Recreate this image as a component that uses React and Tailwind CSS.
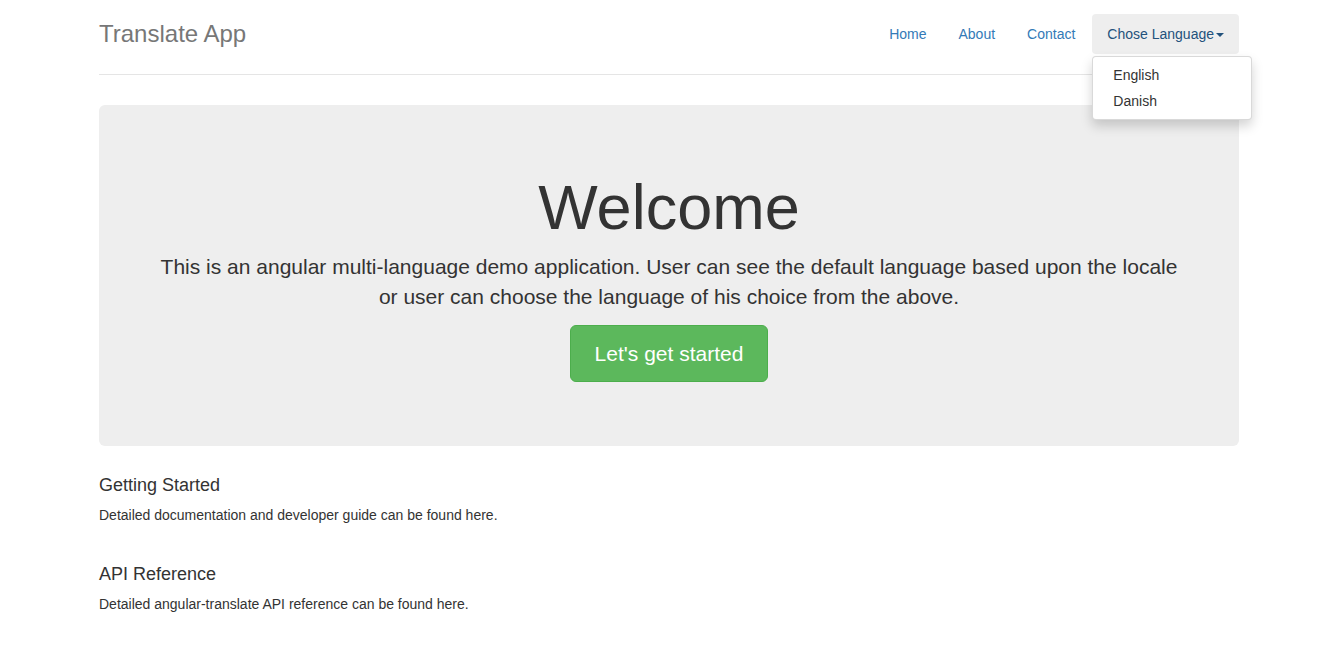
import { useState } from 'react'

const font = { fontFamily: '"Liberation Sans", Arial, Helvetica, sans-serif' }

function Caret() {
  return (
    <span className="inline-block w-0 h-0 ml-[2px] align-middle border-t-[4px] border-t-[#23527c] border-x-[4px] border-x-transparent" />
  )
}

export default function App() {
  const [open, setOpen] = useState(true)

  return (
    <div className="min-h-screen bg-white text-[#333] text-[14px]" style={font}>
      <div className="w-[1171px] mx-auto pl-[15px] pr-[16px]">

        {/* Header */}
        <div className="flex items-center justify-between pt-[14px] pb-[20px] border-b border-[#e5e5e5]">
          <h3 className="text-[24px] leading-[40px] text-[#777]">Translate App</h3>
          <ul className="flex gap-[2px]">
            {['Home', 'About', 'Contact'].map(item => (
              <li key={item}>
                <a href="#" className="block px-[15px] py-[10px] leading-[20px] text-[#337ab7] rounded-[4px] hover:bg-[#eee]">
                  {item}
                </a>
              </li>
            ))}
            <li className="relative">
              <button type="button" onClick={() => setOpen(!open)}
                className="block px-[15px] py-[10px] leading-[20px] text-[#23527c] bg-[#eee] rounded-[4px]">
                Chose Language<Caret />
              </button>
              {open && (
                <ul className="absolute left-0 top-full mt-[2px] min-w-[160px] py-[5px] bg-white border border-black/15 rounded-[4px] shadow-[0_6px_12px_rgba(0,0,0,0.175)] z-10">
                  {['English', 'Danish'].map(lang => (
                    <li key={lang}>
                      <a href="#" className="block px-[20px] py-[3px] leading-[20px] text-[#333] hover:bg-[#f5f5f5]">{lang}</a>
                    </li>
                  ))}
                </ul>
              )}
            </li>
          </ul>
        </div>

        {/* Jumbotron */}
        <div className="mt-[30px] bg-[#eee] rounded-[6px] px-[60px] py-[48px] text-center">
          <h1 className="mt-[20px] mb-[10px] text-[63px] leading-[1.1] text-[#333]">Welcome</h1>
          <p className="text-[21px] leading-[30px]">
            This is an angular multi-language demo application. User can see the default language based upon the locale or user can choose the language of his choice from the above.
          </p>
          <div className="mt-[13px] mb-[16px]">
            <a href="#" className="inline-block px-[24px] py-[14px] text-[21px] leading-[27px] text-white bg-[#5cb85c] border border-[#4cae4c] rounded-[6px]">
              Let's get started
            </a>
          </div>
        </div>

        {/* Marketing */}
        <div className="mt-[30px] pb-[30px]">
          <h4 className="text-[18px] leading-[1.1] mb-[9px]">Getting Started</h4>
          <p className="leading-[20px]">Detailed documentation and developer guide can be found here.</p>

          <h4 className="mt-[40px] text-[18px] leading-[1.1] mb-[9px]">API Reference</h4>
          <p className="leading-[20px]">Detailed angular-translate API reference can be found here.</p>
        </div>
      </div>
    </div>
  )
}
